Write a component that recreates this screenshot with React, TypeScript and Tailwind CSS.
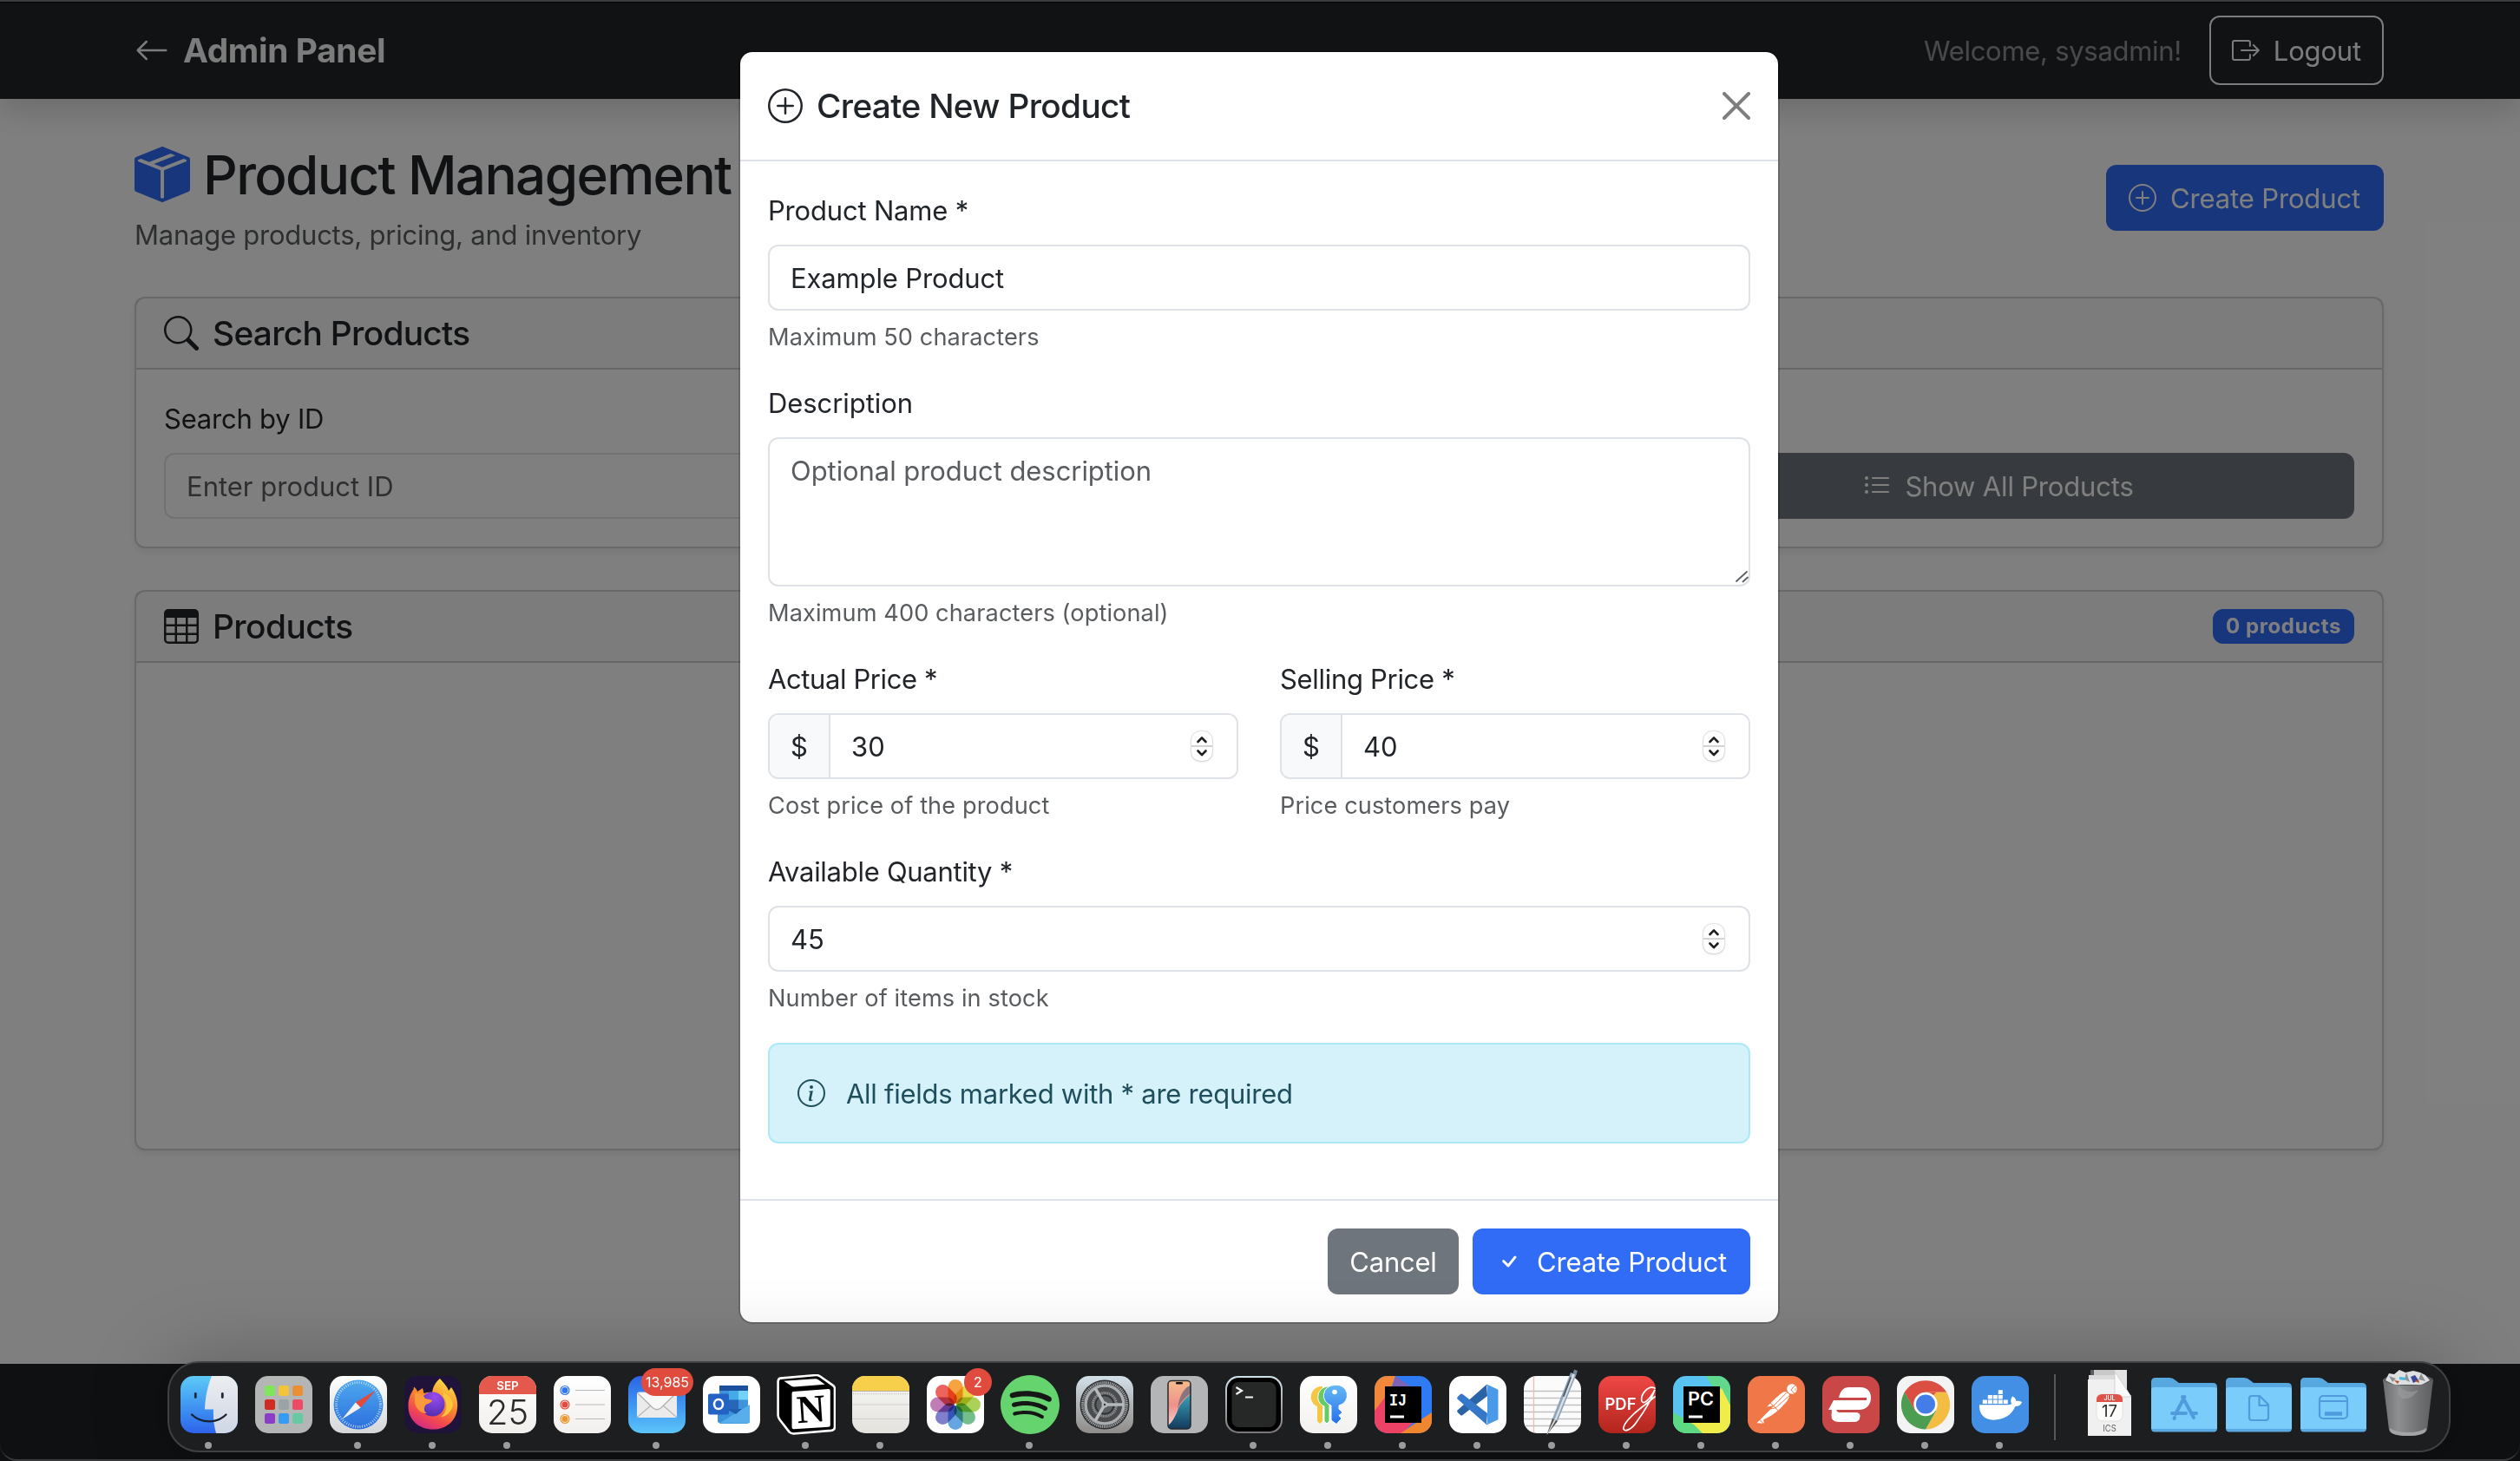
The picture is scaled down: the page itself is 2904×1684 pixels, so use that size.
import type { ReactNode } from 'react';
import {
  BsArrowLeft,
  BsBoxArrowRight,
  BsBoxSeamFill,
  BsCheck,
  BsInfoCircle,
  BsListUl,
  BsPlusCircle,
  BsSearch,
  BsTable,
} from 'react-icons/bs';
import { FaDocker } from 'react-icons/fa';
import { SiPostman, SiSpotify } from 'react-icons/si';

/* ---------- Page behind the dialog ---------- */

function Navbar() {
  return (
    <header className="relative h-[114px] shrink-0 bg-[#212529] pr-0.5 shadow-[0_16px_32px_rgba(0,0,0,0.15)]">
      <div className="mx-auto flex h-full w-[2592px] items-center justify-between pt-[2px]">
        <div className="flex items-center gap-4 text-[38.8px] font-bold tracking-[-0.0085em] text-[#f8f9fa]">
          <BsArrowLeft className="size-10" />
          Admin Panel
        </div>
        <div className="flex items-center gap-8">
          <span className="pt-0.5 tracking-[-0.0092em] text-white/50">Welcome, sysadmin!</span>
          <button className="flex h-20 w-[201px] items-center gap-4 rounded-xl border-2 border-[#f8f9fa] px-6 tracking-[-0.0055em] text-[#f8f9fa]">
            <BsBoxArrowRight className="size-8" />
            <span className="pt-0.5">Logout</span>
          </button>
        </div>
      </div>
    </header>
  );
}

function Card({ header, className, children }: { header: ReactNode; className?: string; children?: ReactNode }) {
  return (
    <section className={`rounded-xl border-2 border-black/[.175] bg-white shadow-[0_4px_8px_rgba(0,0,0,0.075)] ${className ?? ''}`}>
      <div className="flex h-[82px] items-center justify-between border-b-2 border-black/[.175] bg-[#212529]/[.03] px-8">{header}</div>
      {children}
    </section>
  );
}

function PageContent() {
  return (
    <main className="mx-auto w-[2592px] pt-12">
      <div className="flex h-[133px] items-center justify-between">
        <div>
          <h1 className="flex h-[77px] items-center gap-[15px] text-[62px] font-medium leading-[77px] tracking-[-0.0265em]">
            <BsBoxSeamFill className="size-16 text-[#316cf6]" />
            <span className="pt-0.5">Product Management</span>
          </h1>
          <p className="mt-2 tracking-[-0.0076em] text-[#212529]/75">Manage products, pricing, and inventory</p>
        </div>
        <button className="mt-[-1px] flex h-[76px] w-[320px] items-center gap-4 rounded-xl bg-[#316cf6] px-[26px] tracking-[-0.0045em] whitespace-nowrap text-white">
          <BsPlusCircle className="size-8 shrink-0" />
          <span className="pt-0.5">Create Product</span>
        </button>
      </div>

      <Card
        className="mt-[47px]"
        header={
          <h2 className="flex items-center gap-4 text-[38.8px] font-medium tracking-[-0.0175em]">
            <BsSearch className="size-10" />
            Search Products
          </h2>
        }
      >
        <div className="grid grid-cols-3 items-end gap-8 p-8">
          <label className="col-span-2 flex flex-col gap-4">
            <span className="-mb-0.5 leading-[50px] tracking-[-0.0071em]">Search by ID</span>
            <span className="flex h-[76px] items-center rounded-xl border-2 border-[#dee2e6] bg-white px-6 pt-0.5 text-[#212529]/75">Enter product ID</span>
          </label>
          <button className="flex h-[76px] items-center justify-center gap-4 rounded-xl bg-[#6e757d] tracking-[-0.0058em] text-white">
            <BsListUl className="size-8" />
            <span className="pt-0.5">Show All Products</span>
          </button>
        </div>
      </Card>

      <Card
        className="mt-12 h-[646px]"
        header={
          <>
            <h2 className="flex items-center gap-4 text-[38.8px] font-medium tracking-[-0.014em]">
              <BsTable className="size-10" />
              Products
            </h2>
            <span className="flex h-10 w-[163px] items-center justify-center rounded-xl bg-[#316cf6] text-[24px] font-bold tracking-[0.025em] text-white">
              0 products
            </span>
          </>
        }
      />
    </main>
  );
}

/* ---------- Dialog ---------- */

function Stepper() {
  return (
    <span className="flex h-[34px] w-6 flex-col rounded-[10px] bg-white shadow-[0_0_2px_rgba(0,0,0,0.3),0_1px_3px_rgba(0,0,0,0.12)]">
      <svg viewBox="0 0 24 34" className="h-full w-full" fill="none" stroke="#1d1f21" strokeWidth="2.600" strokeLinecap="round" strokeLinejoin="round">
        <path d="M0 17H24" stroke="#d4d4d4" strokeWidth="2" strokeLinecap="butt" />
        <path d="M7.500 12L12 7.300L16.500 12M7.500 22.500L12 27.200L16.500 22.500" />
      </svg>
    </span>
  );
}

function Field({ label, hint, children, tracking }: { label: string; hint: string; children: ReactNode; tracking: string }) {
  return (
    <div className="flex flex-1 flex-col">
      <span className={`-mb-0.5 leading-[50px] ${tracking}`}>{label}</span>
      <div className="mt-4 flex">{children}</div>
      <span className="mt-2 -mb-[3px] text-[27.2px] leading-[45px] tracking-[0.003em] text-[#212529]/75">{hint}</span>
    </div>
  );
}

function PriceInput({ value }: { value: string }) {
  return (
    <div className="flex h-[76px] flex-1 overflow-hidden rounded-xl border-2 border-[#dee2e6]">
      <span className="flex w-[70px] items-center justify-center border-r-2 border-[#dee2e6] bg-[#f8f9fa] pt-0.5">$</span>
      <span className="flex flex-1 items-center justify-between bg-white pr-7 pl-6">
        <span className="pt-0.5">{value}</span>
        <Stepper />
      </span>
    </div>
  );
}

function CreateDialog() {
  return (
    <div role="dialog" className="w-[1200px] overflow-hidden rounded-2xl border-2 border-black/[.175] bg-white bg-clip-padding">
      <div className="flex h-[126px] items-center justify-between border-b-2 border-[#dee2e6] px-8">
        <h2 className="flex items-center gap-4 text-[38.8px] font-medium tracking-[-0.0173em]">
          <BsPlusCircle className="size-10" />
          Create New Product
        </h2>
        <svg viewBox="0 0 16 16" className="size-8" fill="#7f7f7f">
          <path d="M.293.293a1 1 0 0 1 1.414 0L8 6.586 14.293.293a1 1 0 1 1 1.414 1.414L9.414 8l6.293 6.293a1 1 0 0 1-1.414 1.414L8 9.414l-6.293 6.293a1 1 0 0 1-1.414-1.414L6.586 8 .293 1.707a1 1 0 0 1 0-1.414" />
        </svg>
      </div>

      <div className="flex flex-col gap-8 px-8 pt-8 pb-16">
        <Field label="Product Name *" hint="Maximum 50 characters" tracking="tracking-[-0.006em]">
          <span className="flex h-[76px] flex-1 items-center rounded-xl border-2 border-[#dee2e6] px-6 pt-0.5 tracking-[-0.0045em]">Example Product</span>
        </Field>

        <Field label="Description" hint="Maximum 400 characters (optional)" tracking="tracking-[-0.002em]">
          <div className="flex h-[172px] flex-1 items-start justify-between rounded-xl border-2 border-[#dee2e6] pl-6">
            <span className="pt-[13px] tracking-[-0.002em] text-[#212529]/75">Optional product description</span>
            <svg viewBox="0 0 16 16" className="mb-0.5 size-4 self-end" fill="none" stroke="#5c5f61" strokeWidth="1.800" strokeLinecap="round">
              <path d="M2 14L14 3M9.500 14.500L15 9.500" />
            </svg>
          </div>
        </Field>

        <div className="flex gap-12">
          <Field label="Actual Price *" hint="Cost price of the product" tracking="tracking-[-0.013em]">
            <PriceInput value="30" />
          </Field>
          <Field label="Selling Price *" hint="Price customers pay" tracking="tracking-[-0.01em]">
            <PriceInput value="40" />
          </Field>
        </div>

        <Field label="Available Quantity *" hint="Number of items in stock" tracking="tracking-[-0.009em]">
          <span className="flex h-[76px] flex-1 items-center justify-between rounded-xl border-2 border-[#dee2e6] pr-7 pl-6">
            <span className="pt-0.5">45</span>
            <Stepper />
          </span>
        </Field>

        <div className="flex h-[116px] items-center gap-6 rounded-xl border-2 border-[#abe8f8] bg-[#d5f2fb] px-8 tracking-[-0.0085em] text-[#1f4e5c]">
          <BsInfoCircle className="size-8" />
          <span className="pt-0.5">All fields marked with * are required</span>
        </div>
      </div>

      <div className="flex h-[142px] items-center justify-end gap-4 border-t-2 border-[#dee2e6] px-8 text-white">
        <button className="h-[76px] w-[151px] rounded-xl bg-[#6e757d] pt-0.5 tracking-[-0.0074em]">Cancel</button>
        <button className="flex h-[76px] w-[320px] items-center gap-4 rounded-xl bg-[#316cf6] px-[26px] tracking-[-0.0045em] whitespace-nowrap">
          <BsCheck className="size-8 shrink-0" />
          <span className="pt-0.5">Create Product</span>
        </button>
      </div>
    </div>
  );
}

/* ---------- Dock ---------- */

function Tile({ className, children }: { className?: string; children?: ReactNode }) {
  return (
    <div className={`size-[66px] overflow-hidden rounded-[15px] ${className ?? ''}`}>
      <svg viewBox="0 0 66 66" className="size-full">{children}</svg>
    </div>
  );
}

function Slot({ running, badge, children }: { running?: boolean; badge?: string; children: ReactNode }) {
  return (
    <div className="relative flex w-[86px] items-center justify-center pb-[5px]">
      {children}
      {badge && (
        <span className="absolute top-1.5 right-px flex h-8 min-w-8 items-center justify-center rounded-full bg-[#e04b3d] px-[5px] text-[16px] leading-none text-white">
          {badge}
        </span>
      )}
      {running && <span className="absolute bottom-0.5 left-[38px] size-2 rounded-full bg-[#9b9c9d]" />}
    </div>
  );
}

function Finder() {
  return (
    <Tile className="bg-linear-to-b from-[#5fcaf7] to-[#2f62ea]">
      <defs>
        <linearGradient id="face" x1="0" y1="0" x2="0" y2="1">
          <stop offset="0" stopColor="#eceef0" />
          <stop offset="1" stopColor="#ced7e6" />
        </linearGradient>
      </defs>
      <path d="M36 0C31 12 28.500 25 28 38.500H38C37.500 48 38.500 57 41 66H66V0Z" fill="url(#face)" />
      <path d="M17.300 20.500V24.500M48.300 20.500V24.500" stroke="#1d2a3c" strokeWidth="2.800" strokeLinecap="round" />
      <path d="M13 44.500C24 55 42 55 52.500 44.500" fill="none" stroke="#16202e" strokeWidth="2.200" strokeLinecap="round" />
    </Tile>
  );
}

const launchColors = ['#7fe65c', '#f3c33c', '#ea8f32', '#cf2b22', '#9aa3a5', '#ef4a63', '#8c3cc8', '#349cf5', '#65c9a4'];

function Launchpad() {
  return (
    <Tile className="bg-[#b4b6b6]">
      {launchColors.map((c, i) => (
        <rect key={c} x={11 + (i % 3) * 16} y={11 + Math.floor(i / 3) * 16} width="12" height="12" rx="2.500" fill={c} />
      ))}
    </Tile>
  );
}

function Safari() {
  return (
    <Tile className="bg-linear-to-b from-white to-[#d5d6d8]">
      <defs>
        <linearGradient id="sea" x1="0" y1="0" x2="0" y2="1">
          <stop offset="0" stopColor="#4fa9ee" />
          <stop offset="1" stopColor="#2c6fdd" />
        </linearGradient>
      </defs>
      <circle cx="33" cy="33" r="28.500" fill="url(#sea)" />
      <circle cx="33" cy="33" r="25.500" fill="none" stroke="#cfe6fb" strokeWidth="3" strokeDasharray="0.800 1.870" />
      <path d="M53 16.500L29.800 30.500L35.700 36.500Z" fill="#e24a3c" />
      <path d="M14 50L29.800 30.500L35.700 36.500Z" fill="#f1f2f3" />
    </Tile>
  );
}

function Firefox() {
  return (
    <Tile className="bg-[#1f1339]">
      <defs>
        <linearGradient id="flame" x1="0.800" y1="0" x2="0.300" y2="1">
          <stop offset="0" stopColor="#fbe44b" />
          <stop offset="0.450" stopColor="#f98a2b" />
          <stop offset="0.750" stopColor="#f2494f" />
          <stop offset="1" stopColor="#d42a86" />
        </linearGradient>
        <radialGradient id="globe" cx="0.600" cy="0.200" r="0.900">
          <stop offset="0" stopColor="#9a4bf0" />
          <stop offset="1" stopColor="#4a2ca6" />
        </radialGradient>
      </defs>
      <path d="M41 3C45 8 49 11 51 17L54 13C59 20 62 28 61 37C60 52 48 61.500 33 61.500C17 61.500 5 51 4.500 36C4.200 28 6.500 21 10.500 15.500L11 12.500C13 14 14.500 16 15 18L21 14L22.500 20C26 19 29 18.500 32 19C33 12 36 7 41 3Z" fill="url(#flame)" />
      <circle cx="32.500" cy="32.500" r="14" fill="url(#globe)" />
      <path d="M12 20C18 19 22 22 24 26C27 27 30 27 32 28C31 31 27 32 25 33C22 36 22 41 26 43C20 44 13 38 12 30Z" fill="#fb9a3a" />
      <path d="M45 24C50 30 50 42 42 47C48 47 55 41 56 33C56 27 51 22 45 19Z" fill="#fcc53f" />
    </Tile>
  );
}

function Calendar() {
  return (
    <Tile className="bg-linear-to-b from-white to-[#f1efec]">
      <rect width="66" height="21" fill="#e5594d" />
      <text x="33" y="15.700" textAnchor="middle" fontSize="13.500" fontWeight="600" fill="#fff">SEP</text>
      <text x="33" y="55.500" textAnchor="middle" fontSize="40" fontWeight="300" fill="#2a2a2b" textLength="48" lengthAdjust="spacingAndGlyphs">25</text>
    </Tile>
  );
}

function Reminders() {
  return (
    <Tile className="bg-linear-to-b from-white to-[#f2f0ee]">
      {['#2f77f0', '#e5483c', '#ef962f'].map((c, i) => (
        <g key={c}>
          <circle cx="13" cy={16.5 + i * 16.5} r="5" fill="none" stroke={c} strokeWidth="1.200" />
          <circle cx="13" cy={16.5 + i * 16.5} r="3.500" fill={c} />
          <path d={`M25 ${16.5 + i * 16.5}H59`} stroke="#b9b9ba" strokeWidth="1.200" />
        </g>
      ))}
    </Tile>
  );
}

function Mail() {
  return (
    <Tile className="bg-linear-to-b from-[#2d62e6] to-[#5cc4f8]">
      <rect x="10" y="18.500" width="46" height="29.500" rx="2.500" fill="#ebebec" />
      <path d="M11 47L27 33M55 47L39 33" stroke="#b5b6b8" strokeWidth="1.200" />
      <path d="M11 20L28 36.500Q33 41 38 36.500L55 20" fill="#f7f7f8" stroke="#b0b1b3" strokeWidth="1.300" />
    </Tile>
  );
}

function Outlook() {
  return (
    <Tile className="bg-white">
      <rect x="19" y="11" width="33" height="44" rx="1.500" fill="#3d93dc" />
      <rect x="19" y="11" width="33" height="6" fill="#1d4f9f" />
      <rect x="30" y="17" width="11" height="10.500" fill="#44abe8" />
      <rect x="41" y="17" width="11" height="10.500" fill="#72d2f8" />
      <rect x="30" y="27.500" width="11" height="11" fill="#2867b8" />
      <path d="M17 32L54 54H19Q17 54 17 52Z" fill="#3b93dc" />
      <path d="M54 33V53Q54 54.500 52 54.500H19L36 44Z" fill="#57aeea" />
      <path d="M27 38H45L38 44L34 42Z" fill="#1f5fae" />
      <rect x="6" y="20.500" width="24" height="24" rx="2" fill="#2462c4" />
      <ellipse cx="18" cy="32.500" rx="5" ry="5.500" fill="none" stroke="#fff" strokeWidth="2.600" />
    </Tile>
  );
}

function Notion() {
  return (
    <svg viewBox="0 0 66 68" className="h-[70px] w-[68px]">
      <path d="M4 4.500L44 1Q46 0.800 48 2L63 12.500Q65 14 65 16V59Q65 62.500 61 63L19 66.500Q16 66.700 14 64.500L3.500 51Q1.500 48.500 1.500 46V9Q1.500 4.800 4 4.500Z" fill="#000" stroke="#fff" strokeWidth="2.500" strokeLinejoin="round" />
      <path d="M8 7.500L43 5Q45 4.900 46.500 6L54 11.300L19.500 14Q17.500 14 16 12.800Z" fill="#fff" />
      <path d="M18.500 19.500L58 16.500Q60 16.500 60 18.500V57Q60 59 58 59L19 61.500Q17 61.500 17 59.500V21.500Q17 19.700 18.500 19.500Z" fill="#fff" />
      <text x="38.500" y="53.500" textAnchor="middle" fontSize="44" fontWeight="700" fontFamily="Liberation Serif" transform="rotate(-4 39 40)" fill="#000">N</text>
    </svg>
  );
}

function Notes() {
  return (
    <Tile className="bg-linear-to-b from-[#f8f8f7] to-[#e3e2dd]">
      <rect width="66" height="17" fill="#f8cf4a" />
      <path d="M0 17.500H66" stroke="#b5b1a4" />
      <path d="M1 20.500H66" stroke="#c0c0be" strokeWidth="1.500" strokeDasharray="1 1.600" />
      <path d="M0 33H66M0 49.500H66" stroke="#cfcfce" strokeWidth="1.200" />
    </Tile>
  );
}

const petals = ['#f7931f', '#e3cf28', '#9dc93a', '#5bb377', '#4a97dc', '#6a68c4', '#b664ab', '#e9483e'];

function Photos() {
  return (
    <Tile className="bg-white">
      {petals.map((c, i) => (
        <rect key={c} x="24.500" y="4" width="17" height="28" rx="8.500" fill={c} className="mix-blend-multiply" opacity="0.850" transform={`rotate(${i * 45} 33 33)`} />
      ))}
      <circle cx="33" cy="33" r="1.200" fill="#fff" />
    </Tile>
  );
}

function Settings() {
  return (
    <Tile className="bg-linear-to-b from-[#d3e0e9] to-[#8f8c89]">
      <circle cx="33" cy="33" r="28.500" fill="#2f3032" />
      <circle cx="33" cy="33" r="25.500" fill="none" stroke="#a3a6a9" strokeWidth="3" strokeDasharray="1.300 0.900" />
      <circle cx="33" cy="33" r="22" fill="#4a4c4e" stroke="#a9adb0" strokeWidth="3.500" />
      <circle cx="33" cy="33" r="13.500" fill="none" stroke="#8b8e91" strokeWidth="3" strokeDasharray="1.500 0.700" />
      <circle cx="33" cy="33" r="10.500" fill="#5c5f61" stroke="#2f3032" strokeWidth="1.500" />
      <path d="M33 33H55M33 33L22 14M33 33L22 52" stroke="#b5b9bc" strokeWidth="3.500" />
      <circle cx="33" cy="33" r="3.500" fill="#b5b9bc" />
      <circle cx="33" cy="33" r="1.200" fill="#333" />
    </Tile>
  );
}

function Phone() {
  return (
    <Tile className="bg-[#b4b5b6]">
      <defs>
        <linearGradient id="wall" x1="0" y1="0" x2="0" y2="1">
          <stop offset="0" stopColor="#f4bd8c" />
          <stop offset="0.500" stopColor="#ef918c" />
          <stop offset="1" stopColor="#f7d9d3" />
        </linearGradient>
        <linearGradient id="wave" x1="0" y1="0" x2="0" y2="1">
          <stop offset="0" stopColor="#3ba3bb" />
          <stop offset="1" stopColor="#123a5c" />
        </linearGradient>
      </defs>
      <rect x="20" y="5.500" width="26" height="55.500" rx="4" fill="url(#wall)" />
      <path d="M46 21C40 26 34 32 31 40C28 48 24 54 20 57Q20 61 24 61H42Q46 61 46 57Z" fill="url(#wave)" />
      <path d="M46 11C39 13 33 22 31 38C34 30 40 25 46 20Z" fill="#8a7480" />
      <rect x="20" y="5.500" width="26" height="55.500" rx="4" fill="none" stroke="#26282b" strokeWidth="1.500" />
      <rect x="29" y="7" width="8" height="2.500" rx="1.200" fill="#101214" />
    </Tile>
  );
}

function Terminal() {
  return (
    <Tile className="bg-linear-to-b from-[#cfe3ec] to-[#7b7577]">
      <rect x="2" y="2" width="62" height="62" rx="13.500" fill="#000" />
      <rect x="7.500" y="7" width="51" height="52" rx="8" fill="#262727" />
      <path d="M12.500 13L19 17L12.500 21" fill="none" stroke="#f3f3f3" strokeWidth="2.200" />
      <path d="M23 24.500H32" stroke="#f3f3f3" strokeWidth="2.200" />
    </Tile>
  );
}

function Passwords() {
  return (
    <Tile className="bg-linear-to-b from-white to-[#f2f1ef]">
      <defs>
        <linearGradient id="bluekey" x1="0" y1="0" x2="0" y2="1">
          <stop offset="0" stopColor="#66b9f3" />
          <stop offset="1" stopColor="#256ff0" />
        </linearGradient>
      </defs>
      <path d="M23 12C15 14 12 20 13 27C14 31 17 34 20 35V52L23 55L26 52V12Z" fill="#f5c644" />
      <path d="M31 12C23 14 20 20 21 27C22 31 25 34 28 35V52L31 55L34 52V12Z" fill="#66cb63" stroke="#fff" />
      <path d="M40 10.500A12 12 0 0 1 45 34V38L49 42L45 45.500L48 49L42 55.500L36 51V34A12 12 0 0 1 40 10.500Z" fill="url(#bluekey)" stroke="#fff" />
      <circle cx="40" cy="18.500" r="2.800" fill="#fff" />
    </Tile>
  );
}

function IdeMark({ label }: { label: string }) {
  return (
    <>
      <rect x="12" y="12" width="42" height="42" fill="#000" />
      <path d="M18 47H34" stroke="#fff" strokeWidth="2.800" />
      <text x="17" y="33.500" fontSize="21" fontWeight="600" fill="#fff" fontFamily={label === 'IJ' ? 'Liberation Mono' : 'Inter'} textLength={label === 'IJ' ? 20 : 30} lengthAdjust="spacingAndGlyphs">
        {label}
      </text>
    </>
  );
}

function IntelliJ() {
  return (
    <Tile className="bg-[#2f7bf6]">
      <path d="M0 0H24L14 30L0 45Z" fill="#f0873a" />
      <path d="M24 0L44 14L16 30Z" fill="#7d63b8" />
      <path d="M0 40L14 22L50 48L32 66H0Z" fill="#ec4266" />
      <path d="M30 66L66 42V66Z" fill="#f0872f" />
      <IdeMark label="IJ" />
    </Tile>
  );
}

function PyCharm() {
  return (
    <Tile className="bg-[#58c3f1]">
      <path d="M38 0H66V50L50 20Z" fill="#62d88d" />
      <path d="M0 42L30 60L40 66H0Z" fill="#55d693" />
      <path d="M56 14L66 34V66H20L10 50Z" fill="#f0ec4a" />
      <path d="M0 42L24 56L34 66H0Z" fill="#5fd884" />
      <IdeMark label="PC" />
    </Tile>
  );
}

function VsCode() {
  return (
    <Tile className="bg-white">
      <path d="M43 10L9.500 39.500Q8.500 41 9.800 42L13 45Q14.300 46 15.500 45L44 23Z" fill="#2a63a6" />
      <path d="M43 56L9.500 26.500Q8.500 25 9.800 24L13 21Q14.300 20 15.500 21L44 43Z" fill="#3577c8" />
      <path d="M43 10L56 16V50L43 56Q44.500 55 44.500 53V13Q44.500 11 43 10Z" fill="#4a9ae8" stroke="#4a9ae8" strokeLinejoin="round" />
    </Tile>
  );
}

function TextEdit() {
  return (
    <div className="relative">
      <Tile className="bg-[#fbfbfb]">
        <path d="M0 17.500H66M0 25.500H66M0 33.500H66M0 41.500H66M0 49.500H66M0 57.500H66" stroke="#bfc0c2" strokeWidth="1.300" />
        <path d="M11.500 0V66" stroke="#f3b9b4" strokeWidth="1.300" />
      </Tile>
      <svg viewBox="0 0 66 82" className="absolute -top-2 left-0 h-[82px] w-[66px]">
        <path d="M54 4L60.500 6.500L39 60L33 57Z" fill="#8fa3b5" />
        <path d="M56.500 5L59 6L37.500 59L35.500 58Z" fill="#d6e0e8" />
        <path d="M33 57L39 60L28 74L26.500 75.500Z" fill="#4a4d50" />
        <path d="M35 58L37 59L27.500 75L26.500 75.500Z" fill="#d8d8d8" />
        <path d="M58 0.500L62 2L60.500 7L56.500 5.500Z" fill="#6f8495" />
        <path d="M54 10L46 31" stroke="#4a5966" strokeWidth="1.800" strokeLinecap="round" />
      </svg>
    </div>
  );
}

function Pdf() {
  return (
    <Tile className="bg-linear-to-b from-[#ef4845] to-[#b2251c]">
      <text x="7.500" y="39.300" fontSize="18" fontWeight="600" fill="#fff" textLength="36" lengthAdjust="spacingAndGlyphs">PDF</text>
      <path d="M65 14C57 10 48 22 50 29C52 34 60 26 65 16C60 30 52 42 44 53C38 62 30 65 29 61C28 56 38 45 50 36C57 31 61 27 65 24" fill="none" stroke="#fff" strokeWidth="1.700" strokeLinecap="round" />
    </Tile>
  );
}

function Postman() {
  return (
    <div className="flex size-[66px] items-center justify-center overflow-hidden rounded-[15px] bg-[#ef7748]">
      <div className="flex size-[72px] shrink-0 items-center justify-center rounded-full bg-white bg-clip-content p-1">
        <SiPostman className="size-[76px] shrink-0 text-[#ef7748]" />
      </div>
    </div>
  );
}

function ExpressVpn() {
  return (
    <Tile className="bg-[#c94747]">
      <path d="M19 25C21 17 24 13 31 13H44C52 13 56 18 56 25C56 33 51 39 42 39H7L13 28H51V25Z" fill="#fff" />
      <path d="M11 38H16Q16.500 42 20 42H38Q44 42 43.500 47Q43 53 36 53H19Q10 53 10.500 45Z" fill="#fff" />
    </Tile>
  );
}

function Chrome() {
  return (
    <Tile className="bg-[#f3f3f3]">
      <path d="M33 33L8.700 18.800A28.500 28.500 0 0 1 57.300 18.800H33Z" fill="#db4f42" />
      <path d="M33 18.800H57.300A28.500 28.500 0 0 1 33 61.500L45.500 40Z" fill="#f3bd43" />
      <path d="M8.700 18.800L20.700 40L45.300 40L33 61.500A28.500 28.500 0 0 1 8.700 18.800Z" fill="#4c9d52" />
      <path d="M8.700 18.800H45L33 33L20.700 40Z" fill="#db4f42" />
      <path d="M8.700 18.800L20.700 40L30 45L12 45A28.500 28.500 0 0 1 8.700 18.800Z" fill="#4c9d52" />
      <circle cx="33" cy="32.500" r="13.700" fill="#fff" />
      <circle cx="33" cy="32.500" r="11" fill="#447de8" />
    </Tile>
  );
}

function Docker() {
  return (
    <div className="flex size-[66px] items-center justify-center rounded-[15px] bg-[#438fe6]">
      <FaDocker className="size-[49px] text-white" />
    </div>
  );
}

function IcsFile() {
  return (
    <svg viewBox="0 0 52 78" className="h-[78px] w-[52px]">
      <path d="M4 1H46V60H4Z" fill="#c9c9ca" />
      <path d="M4 1H8V8H4Z" fill="#5a5b5d" />
      <path d="M2 7H46V20H2Z" fill="#dcdcdd" />
      <path d="M1 12H33L51 31V77H1Z" fill="#f0f0f1" />
      <path d="M32 1H46V24L51 32L32 30Z" fill="#e4e4e5" />
      <path d="M32 3L46 24L51 32H32Z" fill="#fafafa" stroke="#c4c4c5" strokeWidth="0.700" />
      <rect x="11" y="29" width="30" height="31" rx="6.500" fill="#fbfbfa" stroke="#dddddd" strokeWidth="0.800" />
      <path d="M11 38V35.500Q11 29 17.500 29H34.500Q41 29 41 35.500V38Z" fill="#df5449" />
      <text x="26" y="36.300" textAnchor="middle" fontSize="7" fontWeight="600" fill="#fff">JUL</text>
      <text x="26" y="55" textAnchor="middle" fontSize="19" fill="#2b2b2b" textLength="18" lengthAdjust="spacingAndGlyphs">17</text>
      <text x="26" y="71.500" textAnchor="middle" fontSize="10.500" fill="#66676a" textLength="15.500" lengthAdjust="spacingAndGlyphs">ICS</text>
    </svg>
  );
}

function Folder({ children }: { children: ReactNode }) {
  return (
    <svg viewBox="0 0 76 64" className="h-16 w-[76px]">
      <path d="M0 6Q0 1 5 1H21Q25 1 28 4L32 7H71Q76 7 76 12V40H0Z" fill="#58a8e0" />
      <path d="M0 15Q0 11 4 11H72Q76 11 76 15V59Q76 63.500 72 63.500H4Q0 63.500 0 59Z" fill="#5aa9e2" />
      <path d="M0 15Q0 12 4 12H72Q76 12 76 15V60H0Z" fill="#7accfb" />
      <g fill="none" stroke="#4f9bdc" strokeWidth="3" strokeLinecap="round" strokeLinejoin="round">{children}</g>
    </svg>
  );
}

function Trash() {
  return (
    <svg viewBox="0 0 60 78" className="h-[78px] w-[60px]">
      <defs>
        <linearGradient id="bin" x1="0" y1="0" x2="1" y2="0">
          <stop offset="0" stopColor="#6b6d6f" />
          <stop offset="0.300" stopColor="#8d8f91" />
          <stop offset="0.600" stopColor="#77797b" />
          <stop offset="1" stopColor="#5c5e60" />
        </linearGradient>
      </defs>
      <ellipse cx="30" cy="13" rx="29" ry="7" fill="#55585a" />
      <path d="M4 13L8 5L14 6L20 1L27 4L36 2L44 4L50 7L55 13L46 18H14Z" fill="#dedfe0" />
      <path d="M8 8L16 11L12 15ZM28 4L32 15L26 12ZM45 5L50 14L42 12Z" fill="#8f9294" />
      <path d="M20 9L28 10L26 13L20 12Z" fill="#45b6e0" />
      <path d="M33 9L38 7L42 13L36 16Z" fill="#37479e" />
      <path d="M14 13L20 14L18 17ZM38 14L42 12L43 16Z" fill="#b5512d" />
      <path d="M1 12Q8 19 30 19Q52 19 59 12L52 70Q50 77 30 77Q10 77 8 70Z" fill="url(#bin)" />
      <path d="M9 68Q16 73 30 73Q44 73 51 68L50 72Q46 77 30 77Q13 77 9.500 72Z" fill="#a2a4a6" />
      <path d="M20 20Q30 30 42 24Q34 36 22 34Q16 28 20 20Z" fill="#9b9d9f" opacity="0.600" />
    </svg>
  );
}

function Dock() {
  return (
    <div className="flex h-[105px] w-[2631px] items-stretch rounded-[36px] border-2 border-[#404143] bg-[#1d1e20] pl-[3px] shadow-[0_0_90px_rgba(0,0,0,0.25)]">
      <Slot running><Finder /></Slot>
      <Slot><Launchpad /></Slot>
      <Slot running><Safari /></Slot>
      <Slot running><Firefox /></Slot>
      <Slot running><Calendar /></Slot>
      <Slot><Reminders /></Slot>
      <Slot running badge="13,985"><Mail /></Slot>
      <Slot><Outlook /></Slot>
      <Slot running><Notion /></Slot>
      <Slot running><Notes /></Slot>
      <Slot badge="2"><Photos /></Slot>
      <Slot running>
        <div className="size-[62px] rounded-full bg-[#151716]">
          <SiSpotify className="-m-[3px] size-[68px] text-[#65d46e]" />
        </div>
      </Slot>
      <Slot><Settings /></Slot>
      <Slot><Phone /></Slot>
      <Slot running><Terminal /></Slot>
      <Slot running><Passwords /></Slot>
      <Slot running><IntelliJ /></Slot>
      <Slot running><VsCode /></Slot>
      <Slot running><TextEdit /></Slot>
      <Slot running><Pdf /></Slot>
      <Slot running><PyCharm /></Slot>
      <Slot running><Postman /></Slot>
      <Slot running><ExpressVpn /></Slot>
      <Slot running><Chrome /></Slot>
      <Slot running><Docker /></Slot>
      <div className="flex w-10 items-center justify-center">
        <div className="h-[76px] w-0.5 bg-[#58595b]" />
      </div>
      <Slot><div className="pb-1"><IcsFile /></div></Slot>
      <Slot>
        <Folder>
          <path d="M38.500 23L28 43M36 23L49 47M24 42H40M46 42H52M27 47L26.500 48" strokeWidth="4" />
        </Folder>
      </Slot>
      <Slot>
        <Folder>
          <path d="M30 22H39L49 32V47Q49 50 46 50H30Q27 50 27 47V25Q27 22 30 22ZM38.500 23V33H48" strokeWidth="2.200" />
        </Folder>
      </Slot>
      <Slot>
        <Folder>
          <rect x="22" y="22" width="32" height="26" rx="4" strokeWidth="2.200" />
          <path d="M22 28H54" strokeWidth="1.800" />
          <path d="M28 42.500H48" strokeWidth="4.500" strokeLinecap="butt" />
        </Folder>
      </Slot>
      <Slot><div className="pb-1"><Trash /></div></Slot>
    </div>
  );
}

export default function App() {
  return (
    <div className="relative flex h-[1684px] w-[2904px] flex-col overflow-hidden bg-[#0f1012] font-['Inter',sans-serif] text-[31px] leading-[48px] text-[#212529]">
      <div className="h-[1572px] bg-white">
        <Navbar />
        <div className="pr-0.5">
          <PageContent />
        </div>
      </div>

      <div className="absolute inset-x-0 top-0 flex h-[1572px] items-start justify-center bg-black/50 pt-[58px] pr-[2px]">
        <CreateDialog />
      </div>
      <div className="absolute inset-x-0 top-0 h-[3px] border-b border-black bg-[#3b3c3d]" />

      <div className="absolute inset-x-0 bottom-0 h-[115px] pl-[193px]">
        <Dock />
      </div>
      <div className="absolute inset-x-0 bottom-0 h-5 rounded-b-[20px] border-b-2 border-[#3a3b3d]" />
    </div>
  );
}
